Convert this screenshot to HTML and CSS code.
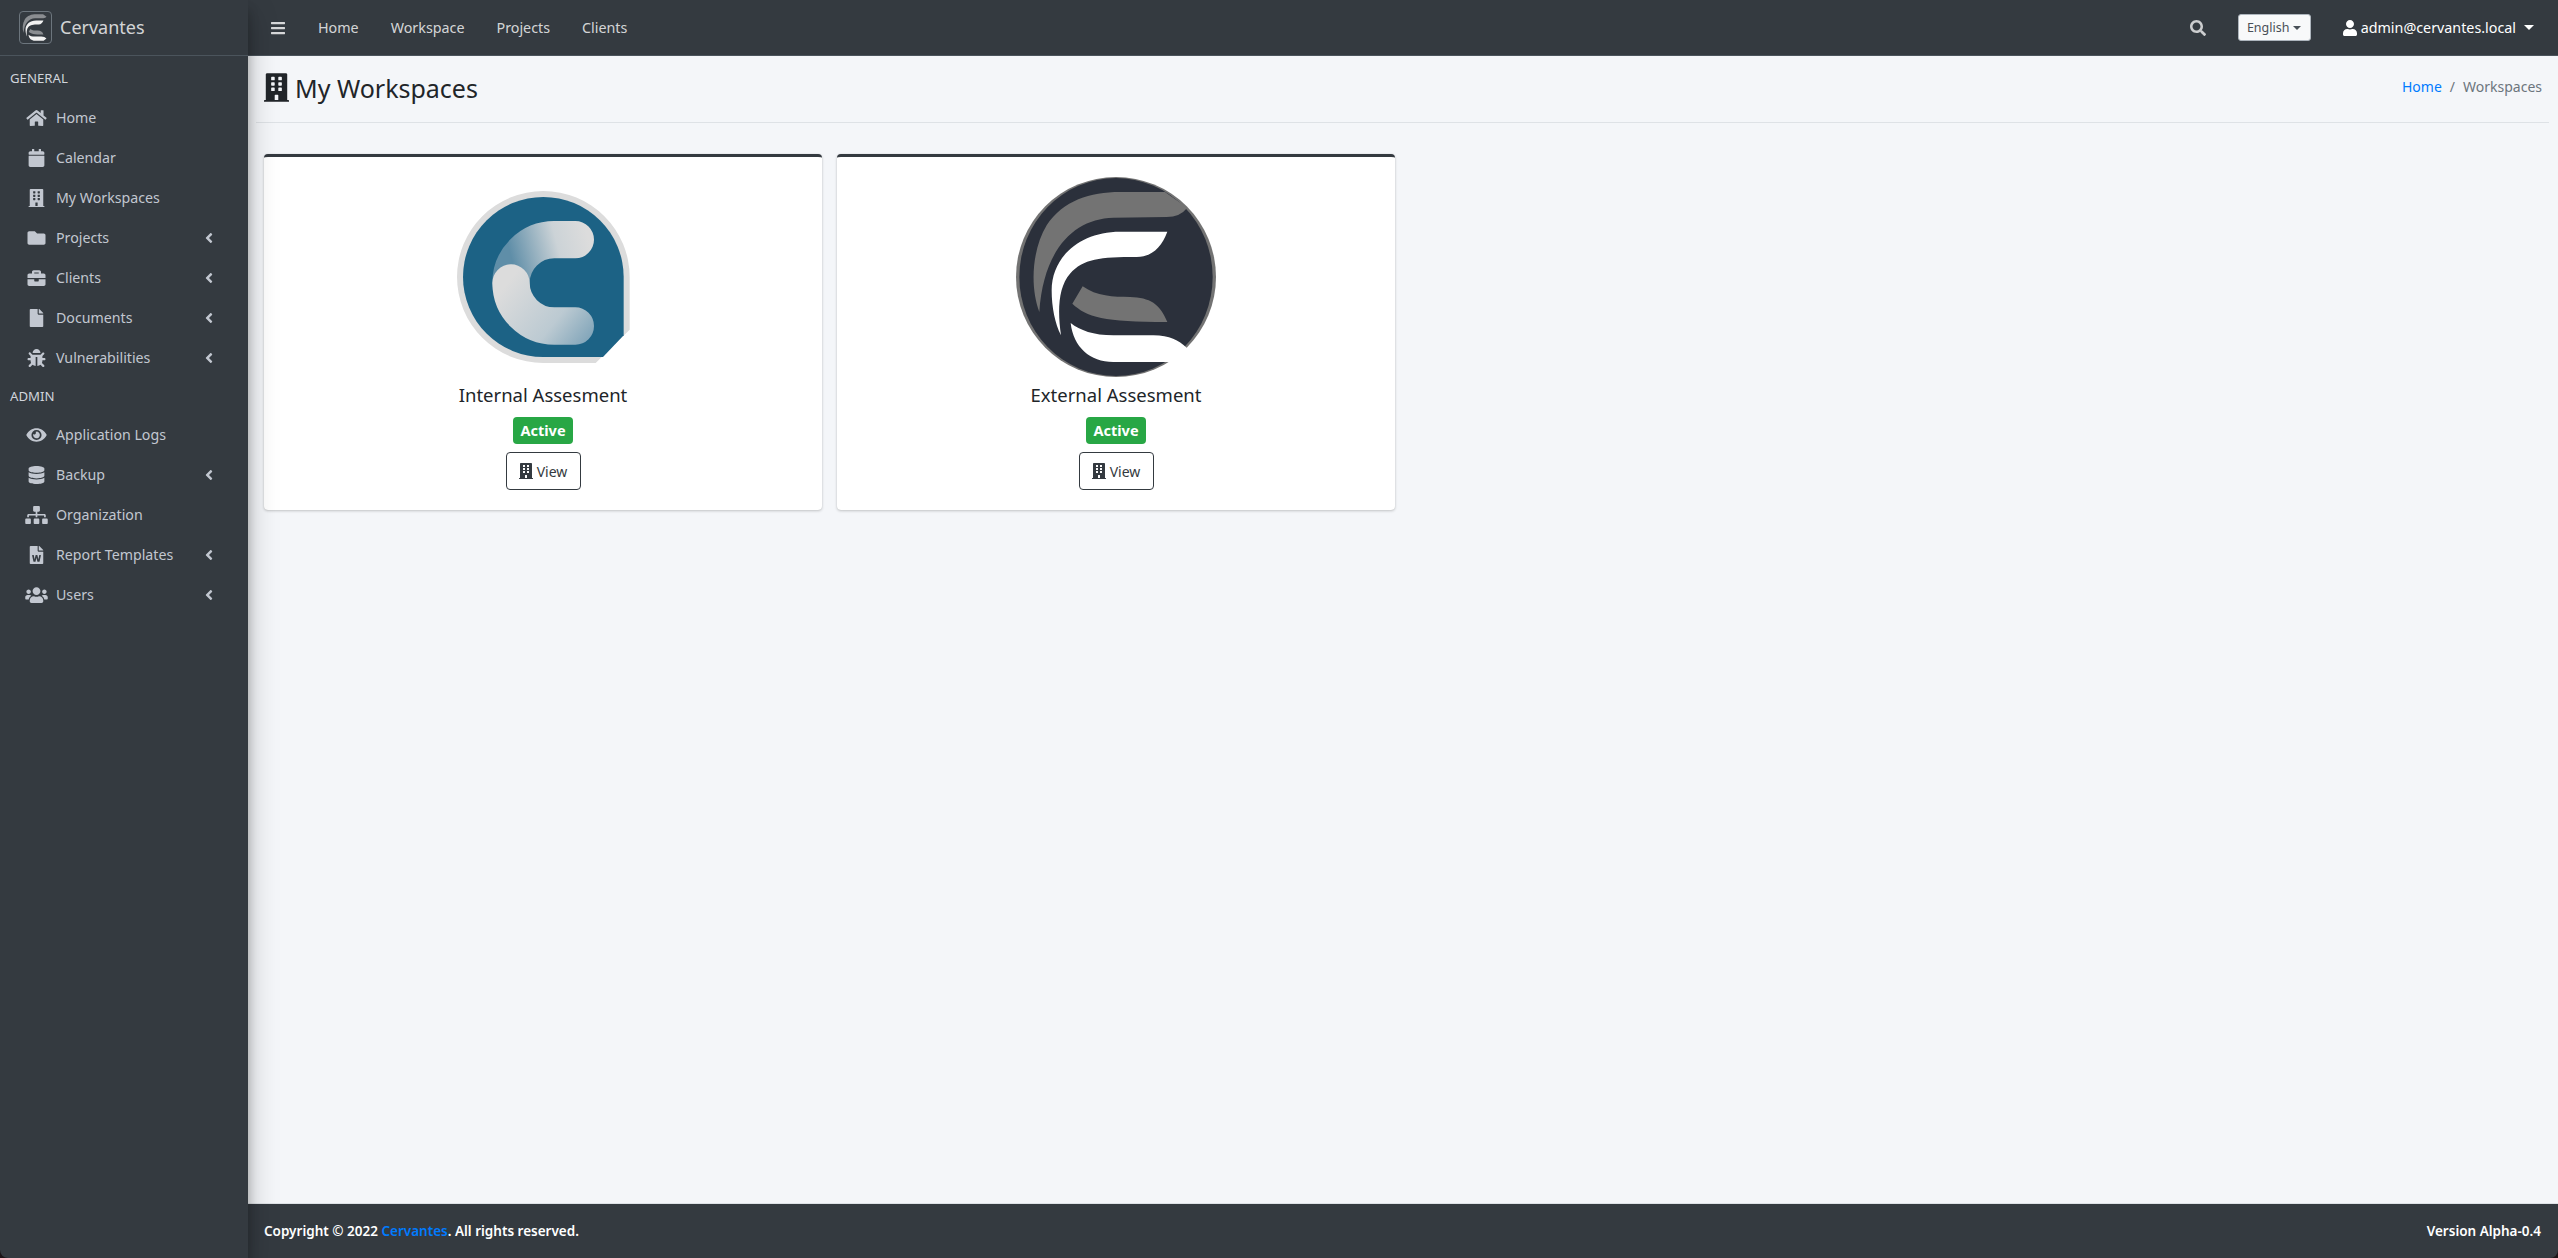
FILE: index.html
```html
<!DOCTYPE html>
<html lang="en">
<head>
<meta charset="UTF-8">
<meta name="viewport" content="width=device-width, initial-scale=1.0">
<title>My Workspaces - Cervantes</title>
<link rel="stylesheet" href="styles.css">
</head>
<body>

<!-- icon sprite -->
<svg class="sprite" xmlns="http://www.w3.org/2000/svg">
  <symbol id="i-home" viewBox="0 0 576 512"><path d="M280.37 148.26L96 300.11V464a16 16 0 0 0 16 16l112.06-.29a16 16 0 0 0 15.92-16V368a16 16 0 0 1 16-16h64a16 16 0 0 1 16 16v95.64a16 16 0 0 0 16 16.05L464 480a16 16 0 0 0 16-16V300L295.67 148.26a12.19 12.19 0 0 0-15.3 0zM571.6 251.47L488 182.56V44.05a12 12 0 0 0-12-12h-56a12 12 0 0 0-12 12v72.61L318.47 43a48 48 0 0 0-61 0L4.34 251.47a12 12 0 0 0-1.6 16.9l25.5 31A12 12 0 0 0 45.15 301l235.22-193.74a12.19 12.19 0 0 1 15.3 0L530.9 301a12 12 0 0 0 16.9-1.6l25.5-31a12 12 0 0 0-1.7-16.93z"/></symbol>
  <symbol id="i-calendar" viewBox="0 0 448 512"><path d="M12 192h424c6.6 0 12 5.4 12 12v260c0 26.5-21.5 48-48 48H48c-26.5 0-48-21.5-48-48V204c0-6.6 5.4-12 12-12zm436-44v-36c0-26.5-21.5-48-48-48h-48V12c0-6.6-5.4-12-12-12h-40c-6.6 0-12 5.4-12 12v52H160V12c0-6.6-5.4-12-12-12h-40c-6.6 0-12 5.4-12 12v52H48C21.5 64 0 85.5 0 112v36c0 6.6 5.4 12 12 12h424c6.6 0 12-5.4 12-12z"/></symbol>
  <symbol id="i-building" viewBox="0 0 448 512"><path d="M436 480h-20V24c0-13.255-10.745-24-24-24H56C42.745 0 32 10.745 32 24v456H12c-6.627 0-12 5.373-12 12v20h448v-20c0-6.627-5.373-12-12-12zM128 76c0-6.627 5.373-12 12-12h40c6.627 0 12 5.373 12 12v40c0 6.627-5.373 12-12 12h-40c-6.627 0-12-5.373-12-12V76zm0 96c0-6.627 5.373-12 12-12h40c6.627 0 12 5.373 12 12v40c0 6.627-5.373 12-12 12h-40c-6.627 0-12-5.373-12-12v-40zm52 148h-40c-6.627 0-12-5.373-12-12v-40c0-6.627 5.373-12 12-12h40c6.627 0 12 5.373 12 12v40c0 6.627-5.373 12-12 12zm76 160h-64v-84c0-6.627 5.373-12 12-12h40c6.627 0 12 5.373 12 12v84zm64-172c0 6.627-5.373 12-12 12h-40c-6.627 0-12-5.373-12-12v-40c0-6.627 5.373-12 12-12h40c6.627 0 12 5.373 12 12v40zm0-96c0 6.627-5.373 12-12 12h-40c-6.627 0-12-5.373-12-12v-40c0-6.627 5.373-12 12-12h40c6.627 0 12 5.373 12 12v40zm0-96c0 6.627-5.373 12-12 12h-40c-6.627 0-12-5.373-12-12V76c0-6.627 5.373-12 12-12h40c6.627 0 12 5.373 12 12v40z"/></symbol>
  <symbol id="i-folder" viewBox="0 0 512 512"><path d="M464 128H272l-64-64H48C21.49 64 0 85.49 0 112v288c0 26.51 21.49 48 48 48h416c26.51 0 48-21.49 48-48V176c0-26.51-21.49-48-48-48z"/></symbol>
  <symbol id="i-briefcase" viewBox="0 0 512 512"><path d="M320 336c0 8.84-7.16 16-16 16h-96c-8.84 0-16-7.16-16-16v-48H0v144c0 25.6 22.4 48 48 48h416c25.6 0 48-22.4 48-48V288H320v48zm144-208h-80V80c0-25.6-22.4-48-48-48H176c-25.6 0-48 22.4-48 48v48H48c-25.6 0-48 22.4-48 48v80h512v-80c0-25.6-22.4-48-48-48zm-144 0H192V96h128v32z"/></symbol>
  <symbol id="i-file" viewBox="0 0 384 512"><path d="M224 136V0H24C10.7 0 0 10.7 0 24v464c0 13.3 10.7 24 24 24h336c13.3 0 24-10.7 24-24V160H248c-13.2 0-24-10.8-24-24zm160-14.1v6.1H256V0h6.1c6.4 0 12.5 2.5 17 7l97.9 98c4.5 4.5 7 10.6 7 16.9z"/></symbol>
  <symbol id="i-bug" viewBox="0 0 512 512"><path d="M511.988 288.9c-.478 17.43-15.217 31.1-32.653 31.1H424v16c0 21.864-4.882 42.584-13.6 61.145l60.228 60.228c12.496 12.497 12.496 32.758 0 45.255-12.498 12.497-32.759 12.496-45.256 0l-54.736-54.736C345.886 467.965 314.351 480 280 480V236c0-6.627-5.373-12-12-12h-24c-6.627 0-12 5.373-12 12v244c-34.351 0-65.886-12.035-90.636-32.108l-54.736 54.736c-12.498 12.497-32.759 12.496-45.256 0-12.496-12.497-12.496-32.758 0-45.255l60.228-60.228C92.882 378.584 88 357.864 88 336v-16H32.666C15.23 320 .491 306.33.013 288.9-.484 270.816 14.028 256 32 256h56v-58.745l-46.628-46.628c-12.496-12.497-12.496-32.758 0-45.255 12.498-12.497 32.758-12.497 45.256 0L141.255 160h229.489l54.627-54.627c12.498-12.497 32.758-12.497 45.256 0 12.496 12.497 12.496 32.758 0 45.255L424 197.255V256h56c17.972 0 32.484 14.816 31.988 32.9zM257 0c-61.856 0-112 50.144-112 112h224C369 50.144 318.856 0 257 0z"/></symbol>
  <symbol id="i-eye" viewBox="0 0 576 512"><path d="M572.52 241.4C518.29 135.59 410.93 64 288 64S57.68 135.64 3.48 241.41a32.35 32.35 0 0 0 0 29.19C57.71 376.41 165.07 448 288 448s230.32-71.64 284.52-177.41a32.35 32.35 0 0 0 0-29.19zM288 400a144 144 0 1 1 144-144 143.93 143.93 0 0 1-144 144zm0-240a95.31 95.31 0 0 0-25.31 3.79 47.85 47.85 0 0 1-66.9 66.9A95.78 95.78 0 1 0 288 160z"/></symbol>
  <symbol id="i-database" viewBox="0 0 448 512"><path d="M448 73.143v45.714C448 159.143 347.667 192 224 192S0 159.143 0 118.857V73.143C0 32.857 100.333 0 224 0s224 32.857 224 73.143zM448 176v102.857C448 319.143 347.667 352 224 352S0 319.143 0 278.857V176c48.125 33.143 136.208 48.572 224 48.572S399.874 209.143 448 176zm0 160v102.857C448 479.143 347.667 512 224 512S0 479.143 0 438.857V336c48.125 33.143 136.208 48.572 224 48.572S399.874 369.143 448 336z"/></symbol>
  <symbol id="i-sitemap" viewBox="0 0 640 512"><path d="M128 352H32c-17.67 0-32 14.33-32 32v96c0 17.67 14.33 32 32 32h96c17.67 0 32-14.33 32-32v-96c0-17.67-14.33-32-32-32zm-24-80h192v48h48v-48h192v48h48v-57.59c0-21.17-17.23-38.41-38.41-38.41H344v-64h40c17.67 0 32-14.33 32-32V32c0-17.67-14.33-32-32-32H256c-17.67 0-32 14.33-32 32v96c0 17.67 14.33 32 32 32h40v64H94.41C73.23 224 56 241.23 56 262.41V320h48v-48zm264 80h-96c-17.67 0-32 14.33-32 32v96c0 17.67 14.33 32 32 32h96c17.67 0 32-14.33 32-32v-96c0-17.67-14.33-32-32-32zm240 0h-96c-17.67 0-32 14.33-32 32v96c0 17.67 14.33 32 32 32h96c17.67 0 32-14.33 32-32v-96c0-17.67-14.33-32-32-32z"/></symbol>
  <symbol id="i-file-word" viewBox="0 0 384 512"><path d="M224 136V0H24C10.7 0 0 10.7 0 24v464c0 13.3 10.7 24 24 24h336c13.3 0 24-10.7 24-24V160H248c-13.2 0-24-10.8-24-24zm57.1 120H305c7.7 0 13.4 7.1 11.7 14.7l-38 168c-1.2 5.5-6.1 9.3-11.7 9.3h-38c-5.5 0-10.3-3.8-11.6-9.1-25.8-103.5-20.8-81.2-25.6-110.5h-.5c-1.1 14.3-2.4 17.4-25.6 110.5-1.3 5.3-6.1 9.1-11.6 9.1H117c-5.6 0-10.5-3.9-11.7-9.4l-37.8-168c-1.7-7.5 4-14.6 11.7-14.6h24.5c5.7 0 10.7 4 11.8 9.7 15.6 78 20.1 109.5 21 122.2 1.6-10.2 7.3-32.7 29.4-122.7 1.3-5.4 6.1-9.1 11.7-9.1h29.1c5.6 0 10.4 3.8 11.7 9.2 24 100.4 28.8 124 29.6 129.4-.2-11.2-2.6-17.8 21.6-129.2 1-5.6 5.9-9.5 11.5-9.5zM384 121.9v6.1H256V0h6.1c6.4 0 12.5 2.5 17 7l97.9 98c4.5 4.5 7 10.6 7 16.9z"/></symbol>
  <symbol id="i-users" viewBox="0 0 640 512"><path d="M96 224c35.3 0 64-28.7 64-64s-28.7-64-64-64-64 28.7-64 64 28.7 64 64 64zm448 0c35.3 0 64-28.7 64-64s-28.7-64-64-64-64 28.7-64 64 28.7 64 64 64zm32 32h-64c-17.6 0-33.5 7.1-45.1 18.6 40.3 22.1 68.9 62 75.1 109.4h66c17.7 0 32-14.3 32-32v-32c0-35.3-28.7-64-64-64zm-256 0c61.9 0 112-50.1 112-112S381.9 32 320 32 208 82.1 208 144s50.1 112 112 112zm76.8 32h-8.3c-20.8 10-43.9 16-68.5 16s-47.6-6-68.5-16h-8.3C179.6 288 128 339.6 128 403.2V432c0 26.5 21.5 48 48 48h288c26.5 0 48-21.5 48-48v-28.8c0-63.6-51.6-115.2-115.2-115.2zm-223.7-13.4C161.5 263.1 145.6 256 128 256H64c-35.3 0-64 28.7-64 64v32c0 17.7 14.3 32 32 32h65.9c6.3-47.4 34.9-87.3 75.2-109.4z"/></symbol>
  <symbol id="i-bars" viewBox="0 0 448 512"><path d="M16 132h416c8.837 0 16-7.163 16-16V76c0-8.837-7.163-16-16-16H16C7.163 60 0 67.163 0 76v40c0 8.837 7.163 16 16 16zm0 160h416c8.837 0 16-7.163 16-16v-40c0-8.837-7.163-16-16-16H16c-8.837 0-16 7.163-16 16v40c0 8.837 7.163 16 16 16zm0 160h416c8.837 0 16-7.163 16-16v-40c0-8.837-7.163-16-16-16H16c-8.837 0-16 7.163-16 16v40c0 8.837 7.163 16 16 16z"/></symbol>
  <symbol id="i-search" viewBox="0 0 512 512"><path d="M505 442.7L405.3 343c-4.5-4.5-10.6-7-17-7H372c27.6-35.3 44-79.7 44-128C416 93.1 322.9 0 208 0S0 93.1 0 208s93.1 208 208 208c48.3 0 92.7-16.4 128-44v16.3c0 6.4 2.5 12.5 7 17l99.7 99.7c9.4 9.4 24.6 9.4 33.9 0l28.3-28.3c9.4-9.4 9.4-24.6.1-34zM208 336c-70.7 0-128-57.2-128-128 0-70.7 57.2-128 128-128 70.7 0 128 57.2 128 128 0 70.7-57.2 128-128 128z"/></symbol>
  <symbol id="i-user" viewBox="0 0 448 512"><path d="M224 256c70.7 0 128-57.3 128-128S294.7 0 224 0 96 57.3 96 128s57.3 128 128 128zm89.6 32h-16.7c-22.2 10.2-46.9 16-72.9 16s-50.6-5.8-72.9-16h-16.7C60.2 288 0 348.2 0 422.4V464c0 26.5 21.5 48 48 48h352c26.5 0 48-21.5 48-48v-41.6c0-74.2-60.2-134.4-134.4-134.4z"/></symbol>
  <symbol id="i-angle-left" viewBox="0 0 256 512"><path d="M31.7 239l136-136c9.4-9.4 24.6-9.4 33.9 0l22.6 22.6c9.4 9.4 9.4 24.6 0 33.9L127.9 256l96.4 96.4c9.4 9.4 9.4 24.6 0 33.9L201.7 409c-9.4 9.4-24.6 9.4-33.9 0l-136-136c-9.5-9.4-9.5-24.6-.1-34z"/></symbol>
</svg>

<div class="app">

  <aside class="sidebar">
    <a class="brand" href="#">
      <span class="brand-logo">
        <svg viewBox="108 50 600 600">
          <path fill="#8a8d91" d="M555 95L622 142Q600 170 560 170L400 172C280 175 190 270 178 455C150 380 155 270 200 195C250 120 330 95 420 95Z"/>
          <path fill="#f2f2f2" d="M562 214L420 214C300 214 215 290 215 390C215 440 225 490 243 525C232 450 235 380 270 340C310 295 360 290 470 290C515 290 545 260 562 214Z"/>
          <path fill="#8a8d91" d="M308 378L277 430C320 470 370 485 562 485C540 430 510 412 450 410C400 410 350 408 308 378Z"/>
          <path fill="#f2f2f2" d="M272 488C300 510 340 525 400 525L520 525C570 525 595 540 620 562L565 605L400 605C330 605 280 560 272 488Z"/>
        </svg>
      </span>
      <span class="brand-text">Cervantes</span>
    </a>

    <nav class="side-nav">
      <div class="side-header">GENERAL</div>
      <a class="side-link" href="#"><svg class="side-icon"><use href="#i-home"/></svg>Home</a>
      <a class="side-link" href="#"><svg class="side-icon"><use href="#i-calendar"/></svg>Calendar</a>
      <a class="side-link" href="#"><svg class="side-icon"><use href="#i-building"/></svg>My Workspaces</a>
      <a class="side-link" href="#"><svg class="side-icon"><use href="#i-folder"/></svg>Projects<svg class="side-arrow"><use href="#i-angle-left"/></svg></a>
      <a class="side-link" href="#"><svg class="side-icon"><use href="#i-briefcase"/></svg>Clients<svg class="side-arrow"><use href="#i-angle-left"/></svg></a>
      <a class="side-link" href="#"><svg class="side-icon"><use href="#i-file"/></svg>Documents<svg class="side-arrow"><use href="#i-angle-left"/></svg></a>
      <a class="side-link" href="#"><svg class="side-icon"><use href="#i-bug"/></svg>Vulnerabilities<svg class="side-arrow"><use href="#i-angle-left"/></svg></a>
      <div class="side-header">ADMIN</div>
      <a class="side-link" href="#"><svg class="side-icon"><use href="#i-eye"/></svg>Application Logs</a>
      <a class="side-link" href="#"><svg class="side-icon"><use href="#i-database"/></svg>Backup<svg class="side-arrow"><use href="#i-angle-left"/></svg></a>
      <a class="side-link" href="#"><svg class="side-icon"><use href="#i-sitemap"/></svg>Organization</a>
      <a class="side-link" href="#"><svg class="side-icon"><use href="#i-file-word"/></svg>Report Templates<svg class="side-arrow"><use href="#i-angle-left"/></svg></a>
      <a class="side-link" href="#"><svg class="side-icon"><use href="#i-users"/></svg>Users<svg class="side-arrow"><use href="#i-angle-left"/></svg></a>
    </nav>
  </aside>

  <div class="main">

    <header class="topbar">
      <a class="top-toggle" href="#"><svg class="icon-bars"><use href="#i-bars"/></svg></a>
      <a class="top-link" href="#">Home</a>
      <a class="top-link" href="#">Workspace</a>
      <a class="top-link" href="#">Projects</a>
      <a class="top-link" href="#">Clients</a>
      <div class="top-right">
        <a class="top-search" href="#"><svg class="icon-search"><use href="#i-search"/></svg></a>
        <button class="lang-btn">English<span class="caret"></span></button>
        <a class="user-menu" href="#"><svg class="icon-user"><use href="#i-user"/></svg>admin@cervantes.local<span class="caret"></span></a>
      </div>
    </header>

    <main class="content">
      <div class="content-header">
        <h1 class="page-title"><svg class="icon-title"><use href="#i-building"/></svg>My Workspaces</h1>
        <div class="breadcrumb"><a href="#">Home</a><span class="crumb-sep">/</span><span class="crumb-active">Workspaces</span></div>
      </div>

      <div class="card-grid">
        <div class="card">
          <svg class="card-logo" viewBox="68 20 600 600">
            <defs>
              <linearGradient id="c-top" gradientUnits="userSpaceOnUse" x1="270" y1="250" x2="500" y2="190">
                <stop offset="0" stop-color="#5f8ea8"/>
                <stop offset="0.6" stop-color="#ccd3d7"/>
                <stop offset="1" stop-color="#dcdcdc"/>
              </linearGradient>
              <linearGradient id="c-bottom" gradientUnits="userSpaceOnUse" x1="260" y1="340" x2="500" y2="530">
                <stop offset="0" stop-color="#dcdcdc"/>
                <stop offset="0.6" stop-color="#bccad2"/>
                <stop offset="1" stop-color="#7ea3b8"/>
              </linearGradient>
            </defs>
            <path fill="#dcdcdc" d="M369 62A259 258 0 0 0 369 578H526L628 478V320A259 258 0 0 0 369 62Z"/>
            <path fill="#1c6285" d="M369 80A241 240 0 0 0 369 560H548L610 495V320A241 240 0 0 0 369 80Z"/>
            <path fill="none" stroke="url(#c-top)" stroke-width="112" stroke-linecap="round" d="M272 338A130 130 0 0 1 402 208H465"/>
            <path fill="none" stroke="url(#c-bottom)" stroke-width="112" stroke-linecap="round" d="M272 338A130 130 0 0 0 402 467H465"/>
          </svg>
          <div class="card-name">Internal Assesment</div>
          <span class="badge">Active</span>
          <a class="view-btn" href="#"><svg class="icon-view"><use href="#i-building"/></svg>View</a>
        </div>

        <div class="card">
          <svg class="card-logo" viewBox="108 50 600 600">
            <circle cx="408" cy="350" r="300" fill="#737373"/>
            <ellipse cx="408" cy="350" rx="290" ry="297" fill="#2b303b"/>
            <path fill="#737373" d="M555 95L622 142Q600 170 560 170L400 172C280 175 190 270 178 455C150 380 155 270 200 195C250 120 330 95 420 95Z"/>
            <path fill="#fff" d="M562 214L420 214C300 214 215 290 215 390C215 440 225 490 243 525C232 450 235 380 270 340C310 295 360 290 470 290C515 290 545 260 562 214Z"/>
            <path fill="#737373" d="M308 378L277 430C320 470 370 485 562 485C540 430 510 412 450 410C400 410 350 408 308 378Z"/>
            <path fill="#fff" d="M272 488C300 510 340 525 400 525L520 525C570 525 595 540 620 562L720 660L640 640L565 605L400 605C330 605 280 560 272 488Z"/>
          </svg>
          <div class="card-name">External Assesment</div>
          <span class="badge">Active</span>
          <a class="view-btn" href="#"><svg class="icon-view"><use href="#i-building"/></svg>View</a>
        </div>
      </div>
    </main>

    <footer class="footer">
      <div><strong>Copyright &copy; 2022 <a href="#">Cervantes</a>. All rights reserved.</strong></div>
      <div><strong>Version Alpha-0.4</strong></div>
    </footer>

  </div>
</div>

</body>
</html>
```

FILE: styles.css
```css
/* Basic reset */
* {
  margin: 0;
  padding: 0;
  box-sizing: border-box;
}

html {
  background: #1c1417;
}

body {
  font-family: "Noto Sans", "Open Sans", Arial, sans-serif;
  font-size: 14px;
  line-height: 1.5;
  color: #212529;
}

a {
  text-decoration: none;
}

.sprite {
  display: none;
}

svg {
  fill: currentColor;
  flex: none;
}

.app {
  display: flex;
  height: 100vh;
  border-radius: 0 0 8px 8px;
  overflow: hidden;
}

/* Sidebar */
.sidebar {
  width: 248px;
  flex: none;
  background: #343a40;
  position: relative;
  z-index: 2;
  box-shadow: 0 14px 28px rgba(0, 0, 0, .25), 0 10px 10px rgba(0, 0, 0, .22);
}

.brand {
  display: flex;
  align-items: center;
  height: 56px;
  padding: 0 0 1px 19px;
  border-bottom: 1px solid #4b545c;
  color: rgba(255, 255, 255, .8);
}

.brand-logo {
  width: 33px;
  height: 33px;
  border: 1px solid #6c757d;
  border-radius: 4px;
  display: flex;
}

.brand-logo svg {
  width: 100%;
  height: 100%;
}

.brand-text {
  margin-left: 8px;
  font-size: 18px;
  font-weight: 400;
}

.side-nav {
  display: flex;
  flex-direction: column;
}

.side-header {
  height: 37px;
  padding: 8px 0 0 10px;
  font-size: 13.2px;
  line-height: 20px;
  color: #d0d4db;
}

.side-header:first-child {
  height: 42px;
  padding-top: 12px;
}

.side-link {
  display: flex;
  align-items: center;
  height: 40px;
  padding: 0 35px 0 25px;
  color: #c2c7d0;
  font-size: 14.2px;
}

.side-icon {
  width: 23px;
  height: 18px;
  margin-right: 8px;
}

.side-arrow {
  width: 8px;
  height: 16px;
  margin-left: auto;
}

/* Main column */
.main {
  flex: 1;
  min-width: 0;
  display: flex;
  flex-direction: column;
}

.topbar {
  display: flex;
  align-items: center;
  height: 56px;
  flex: none;
  padding: 0 24px 0 23px;
  background: #343a40;
  border-bottom: 1px solid #4b545c;
}

.top-toggle {
  color: rgba(255, 255, 255, .8);
  display: flex;
  margin-right: 33px;
}

.icon-bars {
  width: 14px;
  height: 16px;
}

.top-link {
  color: rgba(255, 255, 255, .8);
  margin-right: 32px;
  font-size: 14.3px;
}

.top-right {
  margin-left: auto;
  display: flex;
  align-items: center;
}

.top-search {
  display: flex;
  color: rgba(255, 255, 255, .75);
  margin-right: 32px;
}

.icon-search {
  width: 16px;
  height: 16px;
}

.lang-btn {
  display: flex;
  align-items: center;
  justify-content: center;
  width: 73px;
  height: 27px;
  background: #f8f9fa;
  border: 1px solid #adb5bd;
  border-radius: 3px;
  font-family: inherit;
  font-size: 12.5px;
  color: #495057;
}

.user-menu {
  display: flex;
  align-items: center;
  margin-left: 32px;
  color: #fff;
  font-size: 14.3px;
}

.icon-user {
  width: 14px;
  height: 16px;
  margin-right: 4px;
}

.caret {
  width: 0;
  height: 0;
  margin-left: 4px;
  border-top: 5px solid currentColor;
  border-left: 5px solid transparent;
  border-right: 5px solid transparent;
}

.lang-btn .caret {
  border-width: 4px 4px 0;
}

.user-menu .caret {
  margin-left: 8px;
  border-top-width: 5px;
}

/* Content */
.content {
  flex: 1;
  background: #f4f6f9;
  padding: 0 9px 0 8px;
}

.content-header {
  display: flex;
  justify-content: space-between;
  height: 67px;
  padding: 0 7px 0 8px;
  border-bottom: 1px solid #dee2e6;
}

.page-title {
  display: flex;
  align-items: center;
  height: 63px;
  font-size: 25px;
  font-weight: 400;
  line-height: 1.2;
}

.icon-title {
  width: 25px;
  height: 29px;
  margin-right: 6px;
}

.breadcrumb {
  padding-top: 20px;
}

.breadcrumb a {
  color: #007bff;
}

.crumb-sep {
  margin: 0 8px;
  color: #6c757d;
}

.crumb-active {
  color: #6c757d;
}

.card-grid {
  display: grid;
  grid-template-columns: repeat(4, 558px);
  gap: 15px;
  padding: 31px 0 0 8px;
}

.card {
  display: flex;
  flex-direction: column;
  align-items: center;
  height: 356px;
  padding-top: 20px;
  background: #fff;
  border-top: 3px solid #343a40;
  border-radius: 4px;
  box-shadow: 0 0 1px rgba(0, 0, 0, .125), 0 1px 3px rgba(0, 0, 0, .2);
}

.card-logo {
  width: 200px;
  height: 200px;
}

.card-name {
  margin-top: 4px;
  font-size: 18.5px;
  line-height: 27px;
}

.badge {
  margin-top: 9px;
  width: 60px;
  height: 27px;
  background: #28a745;
  border-radius: 4px;
  color: #fff;
  font-size: 14.5px;
  font-weight: 700;
  line-height: 27px;
  text-align: center;
}

.view-btn {
  display: flex;
  align-items: center;
  justify-content: center;
  margin-top: 8px;
  width: 75px;
  height: 38px;
  border: 1px solid #343a40;
  border-radius: 4px;
  color: #343a40;
}

.icon-view {
  width: 14px;
  height: 16px;
  margin-right: 4px;
}

/* Footer */
.footer {
  display: flex;
  justify-content: space-between;
  align-items: center;
  height: 55px;
  flex: none;
  padding: 0 17px 0 16px;
  background: #343a40;
  border-top: 1px solid #dee2e6;
  color: #fff;
  font-size: 13.5px;
}

.footer strong {
  font-weight: 600;
}

.footer a {
  color: #007bff;
}
```
